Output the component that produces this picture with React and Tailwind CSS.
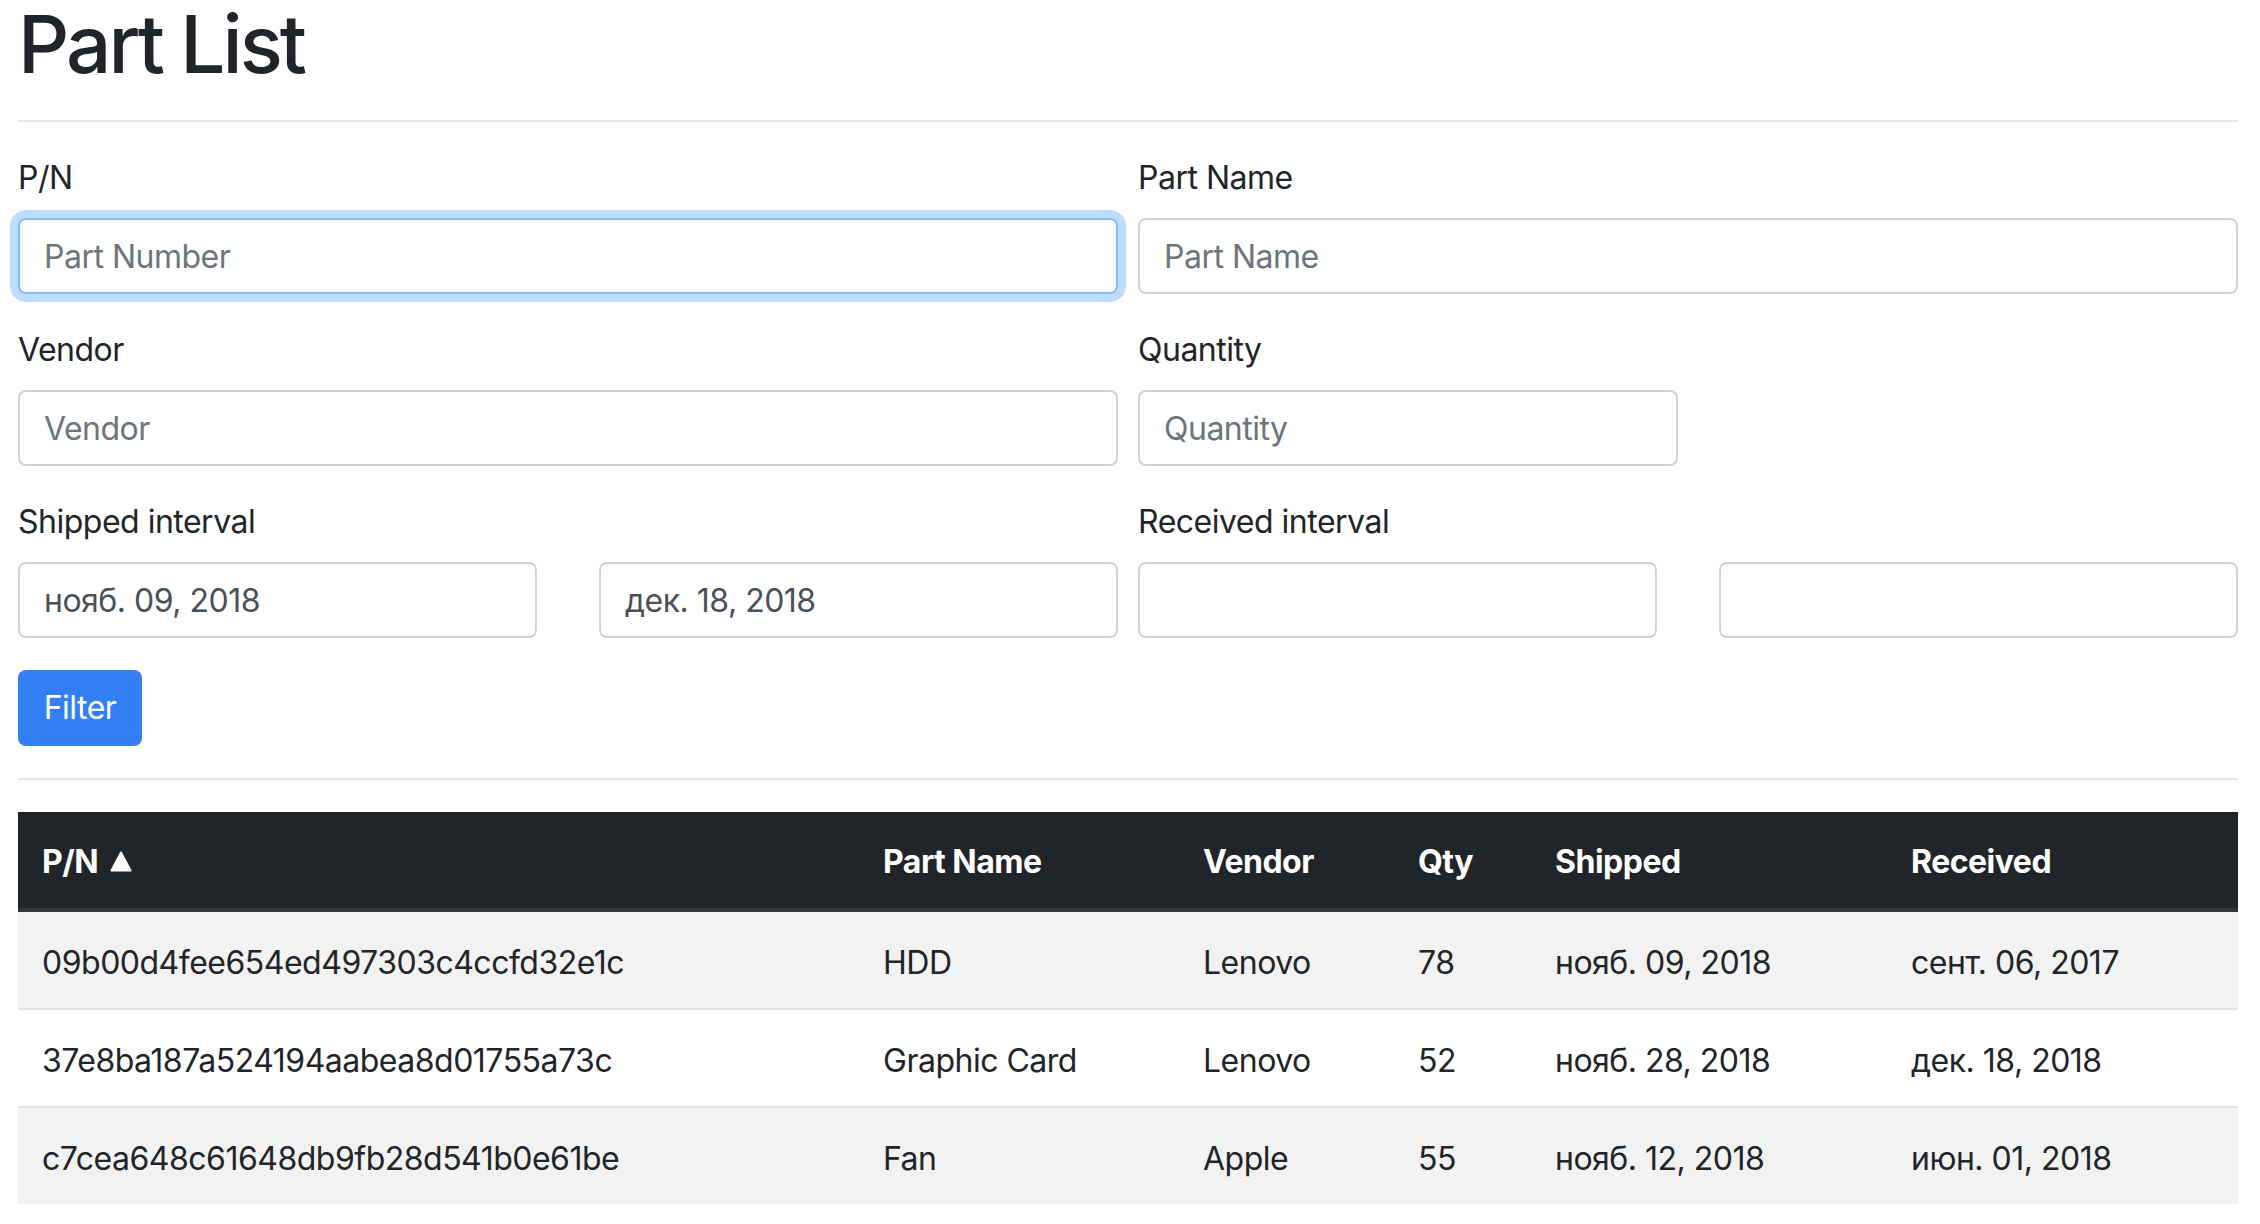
import React from 'react'

const parts = [
  { pn: '09b00d4fee654ed497303c4ccfd32e1c', name: 'HDD', vendor: 'Lenovo', qty: 78, shipped: 'нояб. 09, 2018', received: 'сент. 06, 2017' },
  { pn: '37e8ba187a524194aabea8d01755a73c', name: 'Graphic Card', vendor: 'Lenovo', qty: 52, shipped: 'нояб. 28, 2018', received: 'дек. 18, 2018' },
  { pn: 'c7cea648c61648db9fb28d541b0e61be', name: 'Fan', vendor: 'Apple', qty: 55, shipped: 'нояб. 12, 2018', received: 'июн. 01, 2018' },
]

const inputBase =
  'block w-full h-[76px] px-[24px] border-2 rounded-[8px] bg-white text-[32px] leading-[48px] tracking-[-0.5px] text-[#495057] placeholder:text-[#6c757d] outline-none'

function Field({ value, placeholder, focused, className = '' }) {
  return (
    <input
      type="text"
      defaultValue={value}
      placeholder={placeholder}
      className={`${inputBase} ${
        focused
          ? 'border-[#80bdff] shadow-[0_0_0_8px_rgba(0,123,255,0.25)]'
          : 'border-[#ced4da]'
      } ${className}`}
    />
  )
}

function Label({ children }) {
  return <label className="block mb-[16px] text-[32px] leading-[48px] text-[#212529]">{children}</label>
}

export default function App() {
  return (
    <div className="min-h-screen bg-white pl-[18px] pr-[22px] font-['Inter',sans-serif] tracking-[-0.5px] text-[#212529]">
      <h1 className="pt-[2px] text-[80px] font-medium leading-[84px] tracking-[-3px]">Part List</h1>
      <hr className="mt-[34px] mb-[32px] border-0 border-t-2 border-[#e6e6e6]" />

      {/* Filter form */}
      <div className="grid grid-cols-2 gap-x-[20px]">
        <div className="mb-[32px]">
          <Label>P/N</Label>
          <Field placeholder="Part Number" focused />
        </div>
        <div className="mb-[32px]">
          <Label>Part Name</Label>
          <Field placeholder="Part Name" />
        </div>

        <div className="mb-[32px]">
          <Label>Vendor</Label>
          <Field placeholder="Vendor" />
        </div>
        <div className="mb-[32px]">
          <Label>Quantity</Label>
          <div className="grid grid-cols-2 gap-x-[20px]">
            <Field placeholder="Quantity" />
          </div>
        </div>

        <div className="mb-[32px]">
          <Label>Shipped interval</Label>
          <div className="flex justify-between">
            <Field value="нояб. 09, 2018" className="!w-[519px]" />
            <Field value="дек. 18, 2018" className="!w-[519px]" />
          </div>
        </div>
        <div className="mb-[32px]">
          <Label>Received interval</Label>
          <div className="flex justify-between">
            <Field className="!w-[519px]" />
            <Field className="!w-[519px]" />
          </div>
        </div>
      </div>

      <button className="h-[76px] w-[124px] rounded-[8px] bg-[#3380f6] text-white text-[32px] leading-[48px]">
        Filter
      </button>

      <hr className="mt-[32px] mb-[32px] border-0 border-t-2 border-[#e6e6e6]" />

      {/* Results */}
      <table className="w-full table-fixed border-collapse text-[32px] leading-[48px]">
        <colgroup>
          <col className="w-[841px]" />
          <col className="w-[320px]" />
          <col className="w-[215px]" />
          <col className="w-[137px]" />
          <col className="w-[356px]" />
          <col className="w-[351px]" />
        </colgroup>
        <thead>
          <tr className="bg-[#212529] text-white">
            <th className="px-[24px] pt-[26px] pb-[22px] text-left font-bold border-b-4 border-[#32383e]">
              <span className="inline-flex items-baseline gap-[12px]">
                P/N
                <svg width="22" height="21" viewBox="0 0 22 21" className="self-center translate-y-[-1px]">
                  <path d="M11 1.5 L20.5 19.5 L1.5 19.5 Z" fill="#fff" stroke="#fff" strokeWidth="2" strokeLinejoin="round" />
                </svg>
              </span>
            </th>
            <th className="px-[24px] pt-[26px] pb-[22px] text-left font-bold border-b-4 border-[#32383e]">Part Name</th>
            <th className="px-[24px] pt-[26px] pb-[22px] text-left font-bold border-b-4 border-[#32383e]">Vendor</th>
            <th className="px-[24px] pt-[26px] pb-[22px] text-left font-bold border-b-4 border-[#32383e]">Qty</th>
            <th className="px-[24px] pt-[26px] pb-[22px] text-left font-bold border-b-4 border-[#32383e]">Shipped</th>
            <th className="px-[24px] pt-[26px] pb-[22px] text-left font-bold border-b-4 border-[#32383e]">Received</th>
          </tr>
        </thead>
        <tbody>
          {parts.map((p, i) => (
            <tr key={p.pn} className={i % 2 === 0 ? 'bg-[#f2f2f2]' : 'bg-white'}>
              <td className="px-[24px] pt-[27px] pb-[21px] border-t-2 border-[#dee2e6]">{p.pn}</td>
              <td className="px-[24px] pt-[27px] pb-[21px] border-t-2 border-[#dee2e6]">{p.name}</td>
              <td className="px-[24px] pt-[27px] pb-[21px] border-t-2 border-[#dee2e6]">{p.vendor}</td>
              <td className="px-[24px] pt-[27px] pb-[21px] border-t-2 border-[#dee2e6]">{p.qty}</td>
              <td className="px-[24px] pt-[27px] pb-[21px] border-t-2 border-[#dee2e6]">{p.shipped}</td>
              <td className="px-[24px] pt-[27px] pb-[21px] border-t-2 border-[#dee2e6]">{p.received}</td>
            </tr>
          ))}
        </tbody>
      </table>
    </div>
  )
}
